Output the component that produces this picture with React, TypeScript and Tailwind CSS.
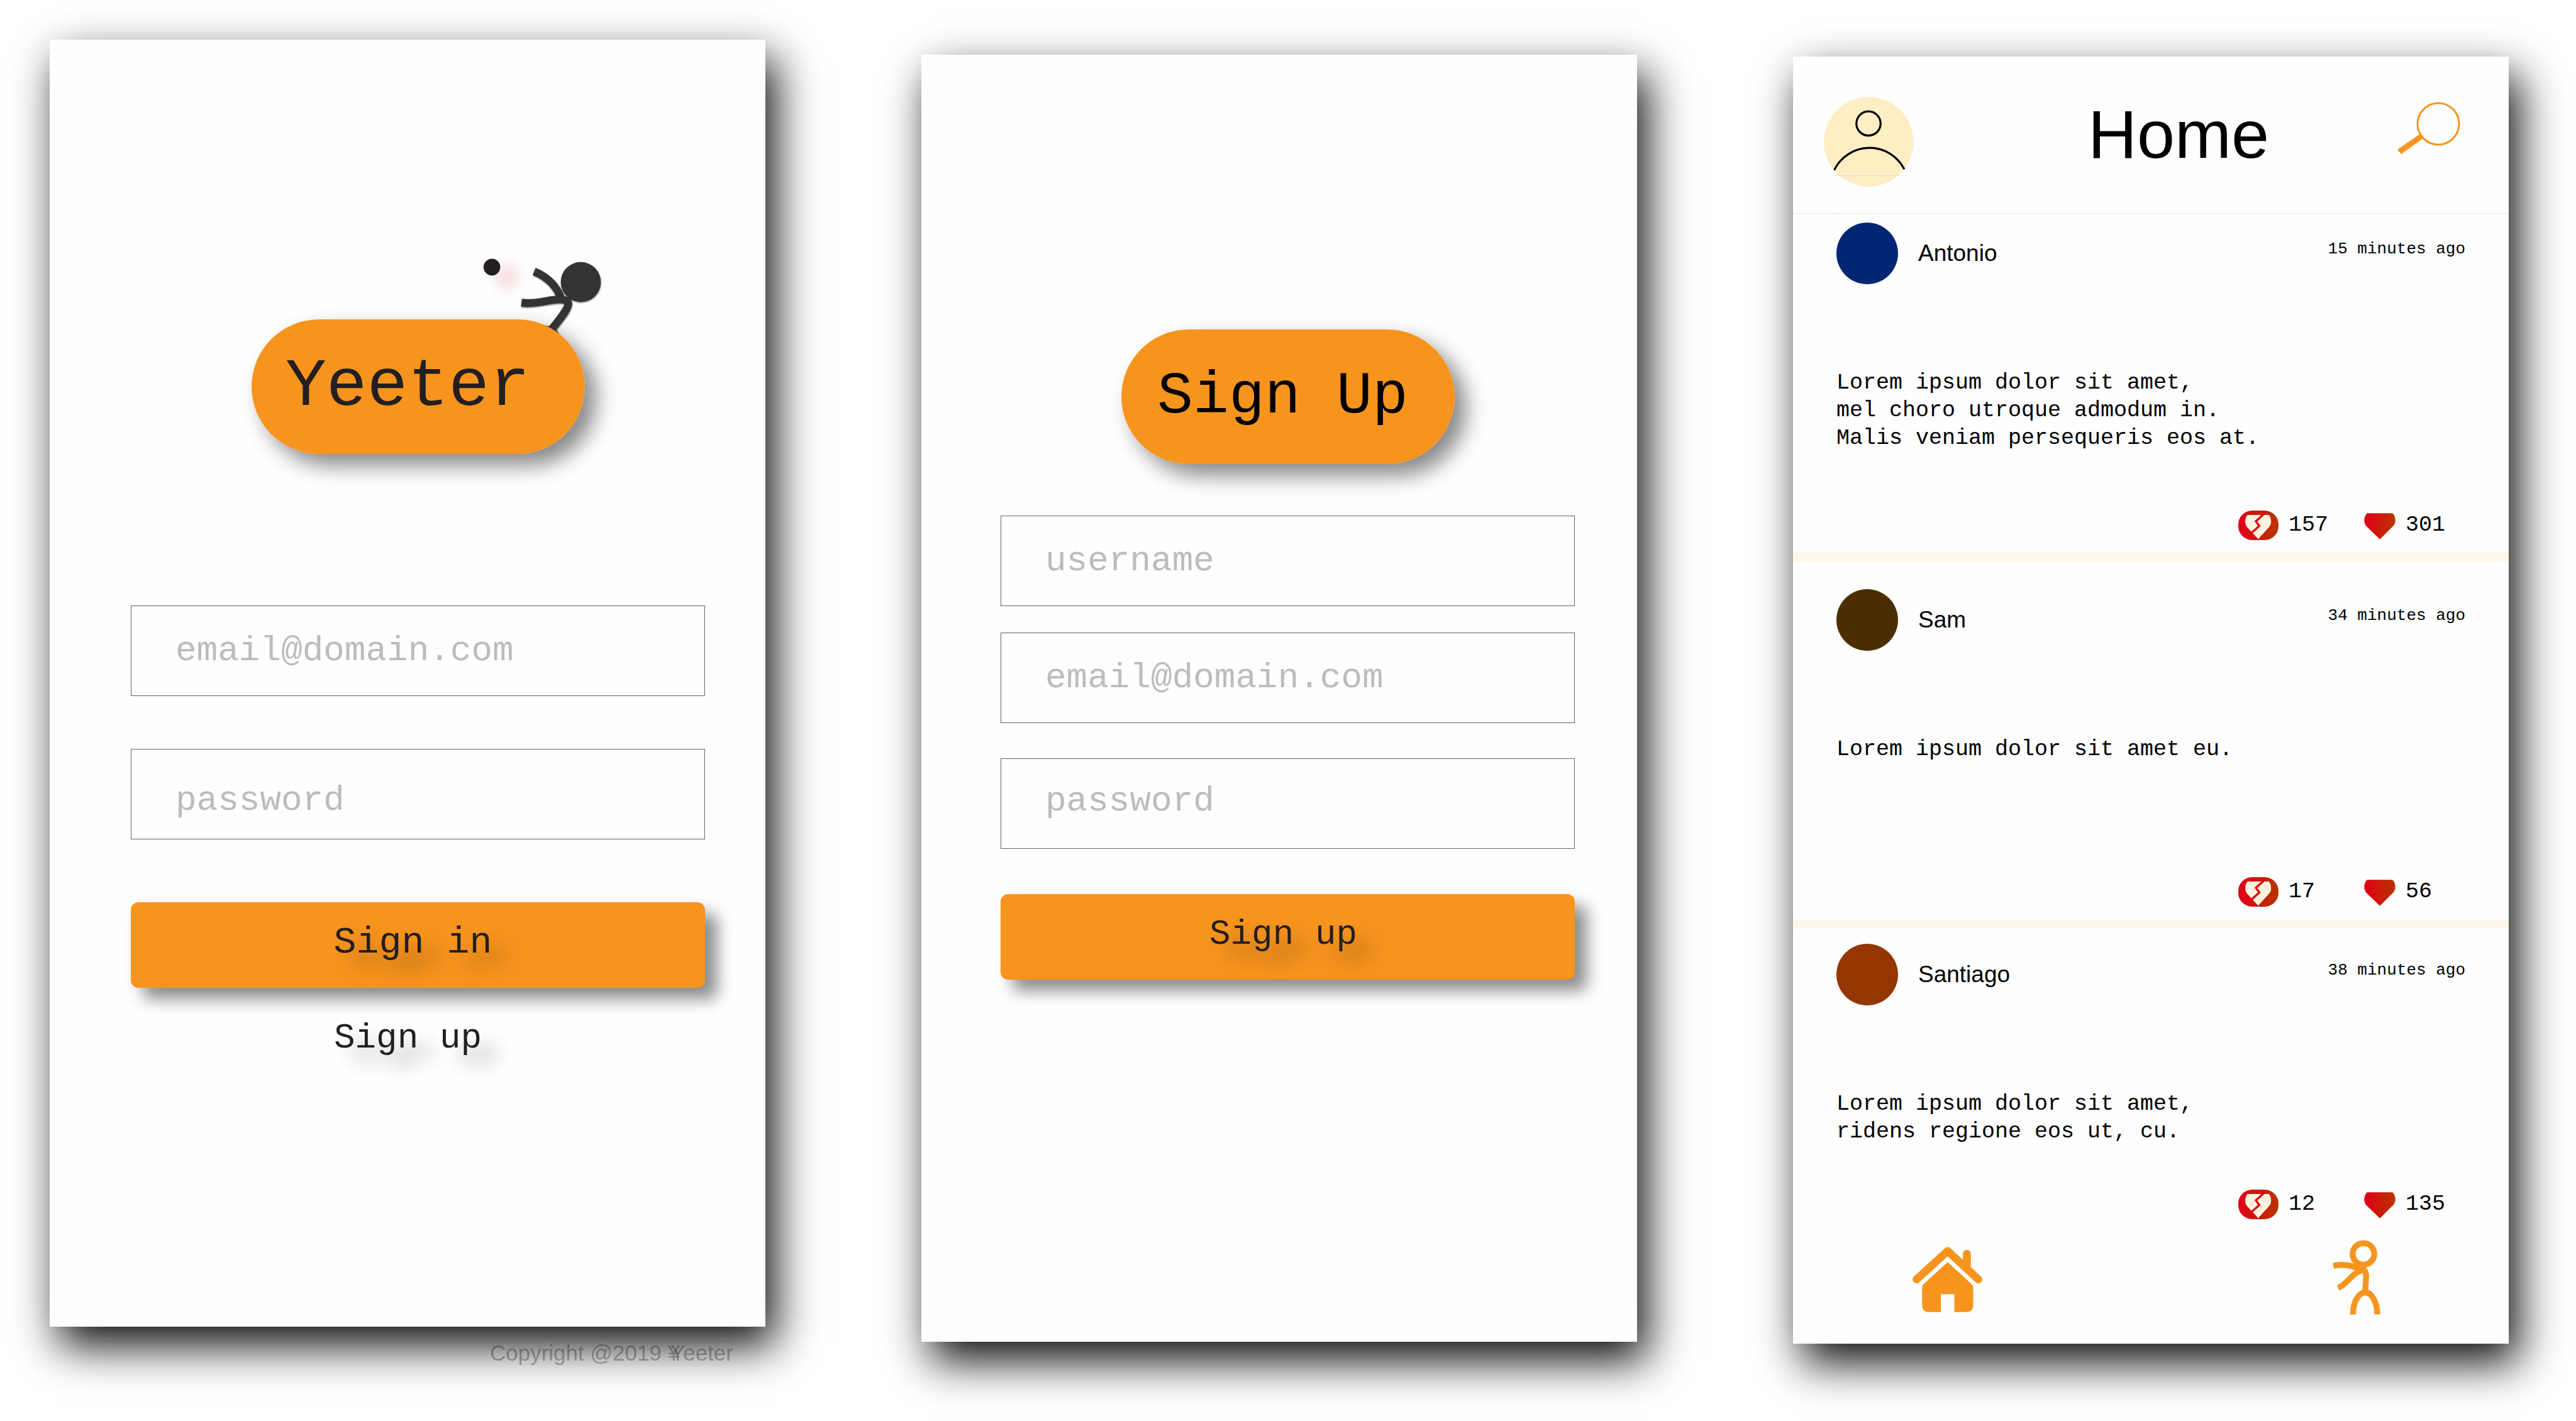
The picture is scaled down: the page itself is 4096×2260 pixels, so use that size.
import React, { useId } from "react";

const MONO = 'font-["Liberation_Mono",monospace]';

type FieldProps = {
  label: string;
  type: string;
  className?: string;
  inputClassName?: string;
};

function Field({ label, type, className = "", inputClassName = "" }: FieldProps) {
  return (
    <div className={className}>
      <input
        aria-label={label}
        type={type}
        placeholder={label}
        className={`block h-36 w-full border border-[#666] bg-transparent px-[70px] text-[56px] text-[#231f20] outline-none placeholder:text-[#bcbcbc] placeholder:opacity-100 ${inputClassName} ${MONO}`}
      />
    </div>
  );
}

function Thrower() {
  return (
    <svg
      viewBox="0 0 960 780"
      className="absolute -top-[124px] left-[354px] h-[192px] w-[237px] overflow-visible"
      aria-hidden="true"
    >
      <defs>
        <radialGradient id="blush">
          <stop offset="0" stopColor="#f8e0e2" />
          <stop offset="0.25" stopColor="#f9e6e8" />
          <stop offset="0.6" stopColor="#fdf7f7" />
          <stop offset="1" stopColor="#fefefe" stopOpacity="0" />
        </radialGradient>
      </defs>
      <circle cx="208" cy="228" r="170" fill="url(#blush)" />
      <circle cx="113" cy="166" r="54" fill="#231f20" />
      <g className="drop-shadow-[2px_5px_4px_rgba(0,0,0,0.6)]">
        <circle cx="687" cy="262" r="129" fill="#333333" />
        <g fill="none" stroke="#333333" strokeWidth="50">
          <path d="M386 194 C470 228 532 290 562 372" />
          <path d="M304 396 C400 408 480 374 545 374 C585 374 608 385 606 405 C604 440 550 505 490 578" />
          <path d="M400 570 Q510 555 530 625" />
        </g>
      </g>
    </svg>
  );
}

function PersonIcon() {
  return (
    <svg viewBox="69 84 580 580" className="h-[143px] w-[143px] overflow-visible" aria-hidden="true">
      <circle cx="358" cy="374" r="289" fill="#ffedc4" />
      <circle cx="362" cy="652" r="247" fill="none" stroke="#ececec" strokeWidth="2" strokeDasharray="10 5" />
      <path d="M123 592H602" stroke="#ececec" strokeWidth="3" />
      <path d="M165 592H551" stroke="#e2d3ae" strokeWidth="3" />
      <g fill="none" stroke="#000" strokeWidth="13">
        <circle cx="357" cy="256" r="78" />
        <path d="M136 557 A252 252 0 0 1 588 551" />
      </g>
    </svg>
  );
}

function SearchIcon() {
  return (
    <svg viewBox="0 0 100 84" className="h-[84px] w-[100px]" aria-hidden="true">
      <circle cx="65" cy="35" r="33" fill="none" stroke="#f7941e" strokeWidth="3" />
      <path d="M36 51L41 58L6 83L0 76Z" fill="#f7941e" />
    </svg>
  );
}

const HEART =
  "M6 .5H61C65 4 67 10 67 15.6C67 21 65.5 25 61.5 29L33.7 56.7L5 29C1.5 25 0 21 0 15.6C0 10 2 5 6 .5Z";

function RedGradient({ id }: { id: string }) {
  return (
    <defs>
      <linearGradient id={id}>
        <stop offset="0.1" stopColor="#df0417" />
        <stop offset="0.95" stopColor="#b93200" />
      </linearGradient>
    </defs>
  );
}

function BrokenHeart() {
  const id = useId();
  return (
    <svg viewBox="0 0 87 64" className="h-[47px] w-[64px]" aria-hidden="true">
      <RedGradient id={id} />
      <rect width="87" height="64" rx="30" fill={`url(#${id})`} />
      <path d={HEART} transform="translate(15 9) scale(.835 .93)" fill="#fff3de" />
      <path d="M59 4.5L38 23L45.5 33.5L29 48" fill="none" stroke="#df0417" strokeWidth="4.5" />
    </svg>
  );
}

function Heart() {
  const id = useId();
  return (
    <svg viewBox="0 0 67 57" className="mt-1 h-[42px] w-[50px]" aria-hidden="true">
      <RedGradient id={id} />
      <path d={HEART} fill={`url(#${id})`} />
    </svg>
  );
}

function HouseIcon() {
  return (
    <svg viewBox="0 0 150 141" className="h-[104px] w-[111px]" aria-hidden="true">
      <g fill="none" stroke="#f7941e" strokeWidth="17" strokeLinecap="round" strokeLinejoin="round">
        <path d="M8.5 70L75.5 9L141.5 70" />
        <path d="M117 15V42" />
      </g>
      <path
        d="M75.5 33L128 81Q130.6 84 130.6 88V125Q130.6 140.6 115 140.6H90V102H61V140.6H36Q20.4 140.6 20.4 125V88Q20.4 84 23 81Z"
        fill="#f7941e"
      />
    </svg>
  );
}

function StickmanIcon() {
  return (
    <svg viewBox="353 147 310 484" className="h-[119px] w-[76px]" aria-hidden="true">
      <g fill="none" stroke="#f7941e" strokeWidth="38">
        <circle cx="553" cy="237" r="70" />
        <path d="M357 314C415 303 470 306 530 336" />
        <path d="M389 458C455 428 490 345 552 342" />
        <path d="M548 342C578 338 571 390 564 482" />
        <path d="M487 630C482 555 520 487 567 487C605 487 646 555 642 630" />
      </g>
    </svg>
  );
}

const CARD = "bg-[#fefefe] shadow-[15px_30px_66px_rgba(0,0,0,0.95)]";
const PILL_SHADOW = "rounded-full shadow-[18px_18px_34px_rgba(0,0,0,0.47)]";
const BUTTON =
  "block h-[136px] w-full rounded-xl bg-[#f7941e] pb-2 text-center text-[#231f20] shadow-[19px_18px_26px_rgba(0,0,0,0.45)] [text-shadow:25px_23px_32px_rgba(0,0,0,0.32)]";

function SignInScreen() {
  return (
    <div className="mt-[63px] min-w-0">
      <section className={`min-h-[2047px] pt-[445px] pr-24 pl-[129px] ${CARD}`}>
        <div className={`relative ml-48 h-[214px] w-[530px] ${PILL_SHADOW}`}>
          <Thrower />
          <h1
            className={`relative flex h-full items-center rounded-full bg-[#f7941e] pl-[54px] text-[108px] leading-none text-[#231f20] ${MONO}`}
          >
            Yeeter
          </h1>
        </div>
        <form className="mt-[241px]" onSubmit={(e) => e.preventDefault()}>
          <Field label="email@domain.com" type="email" />
          <Field label="password" type="password" className="mt-21" inputClassName="pt-5" />
          <button type="submit" className={`mt-25 pr-4 text-[60px] ${BUTTON} ${MONO}`}>
            Sign in
          </button>
        </form>
        <div className="mt-12 flex justify-center pr-8">
          <a
            href="#sign-up"
            className={`text-[56px] leading-[64px] text-[#231f20] [text-shadow:25px_23px_28px_rgba(0,0,0,0.3)] ${MONO}`}
          >
            Sign up
          </a>
        </div>
      </section>
      <footer className='relative mt-5 pr-[51px] text-right font-["Liberation_Sans",sans-serif] text-[35px] leading-[44px] text-black/30'>
        Copyright @2019 <span className="-mr-[15px]">¥</span>Yeeter
      </footer>
    </div>
  );
}

function SignUpScreen() {
  return (
    <section
      id="sign-up"
      className={`mt-[87px] min-h-[2047px] min-w-0 self-start pt-[437px] pr-[99px] pl-[126px] ${CARD}`}
    >
      <div className={`ml-48 h-[214px] w-[530px] ${PILL_SHADOW}`}>
        <h1
          className={`flex h-full items-center rounded-full bg-[#f7941e] pl-[57px] text-[95px] leading-none text-black ${MONO}`}
        >
          Sign Up
        </h1>
      </div>
      <form className="mt-[82px]" onSubmit={(e) => e.preventDefault()}>
        <Field label="username" type="text" />
        <Field label="email@domain.com" type="email" className="mt-[42px]" />
        <Field label="password" type="password" className="mt-14" inputClassName="pb-2" />
        <button type="submit" className={`mt-18 pr-3.5 text-[56px] ${BUTTON} ${MONO}`}>
          Sign up
        </button>
      </form>
    </section>
  );
}

type Post = {
  name: string;
  time: string;
  lines: string[];
  broken: number;
  hearts: number;
  avatar: string;
  spacing: string;
  body: string;
};

const POSTS: Post[] = [
  {
    name: "Antonio",
    time: "15 minutes ago",
    lines: ["Lorem ipsum dolor sit amet,", "mel choro utroque admodum in.", "Malis veniam persequeris eos at."],
    broken: 157,
    hearts: 301,
    avatar: "bg-[#002673]",
    spacing: "pt-3.5 pb-[23px] border-b-[15px]",
    body: "min-h-[222px]",
  },
  {
    name: "Sam",
    time: "34 minutes ago",
    lines: ["Lorem ipsum dolor sit amet eu."],
    broken: 17,
    hearts: 56,
    avatar: "bg-[#4b2e00]",
    spacing: "pt-[43px] pb-[23px] border-b-[15px]",
    body: "min-h-[222px]",
  },
  {
    name: "Santiago",
    time: "38 minutes ago",
    lines: ["Lorem ipsum dolor sit amet,", "ridens regione eos ut, cu."],
    broken: 12,
    hearts: 135,
    avatar: "bg-[#943600]",
    spacing: "pt-6",
    body: "min-h-[155px]",
  },
];

function PostItem({ post }: { post: Post }) {
  return (
    <article className={`border-[#fff7eb] px-[69px] ${post.spacing}`}>
      <header className="flex h-[98px] items-start">
        <span className={`h-[98px] w-[98px] rounded-full ${post.avatar}`} />
        <h2 className='mt-[27px] ml-8 font-["Liberation_Sans",sans-serif] text-[37px] leading-[44px] text-black'>
          {post.name}
        </h2>
        <time className={`mt-[26px] ml-auto text-[26px] leading-8 text-black ${MONO}`}>{post.time}</time>
      </header>
      <p className={`mt-[135px] text-[35px] leading-[44px] text-black ${post.body} ${MONO}`}>
        {post.lines.map((line) => (
          <span key={line} className="block">
            {line}
          </span>
        ))}
      </p>
      <div className={`grid h-[47px] grid-cols-[200px_161px] justify-end text-[35px] text-black ${MONO}`}>
        <button type="button" aria-label={`Broken hearts: ${post.broken}`} className="flex items-center gap-4">
          <BrokenHeart />
          <span>{post.broken}</span>
        </button>
        <button type="button" aria-label={`Hearts: ${post.hearts}`} className="flex items-center gap-4">
          <Heart />
          <span>{post.hearts}</span>
        </button>
      </div>
    </article>
  );
}

function HomeScreen() {
  return (
    <section className={`mt-[90px] min-w-0 self-start pb-[46px] ${CARD}`}>
      <header className="flex h-[250px] items-start border-b border-[#e4e4e4] pt-16 pr-[77px] pl-[49px]">
        <button type="button" aria-label="Profile" className="block">
          <PersonIcon />
        </button>
        <h1 className='mt-1.5 ml-[277px] font-["Liberation_Sans",sans-serif] text-[108px] leading-none text-black'>
          Home
        </h1>
        <button type="button" aria-label="Search" className="mt-2 ml-auto block">
          <SearchIcon />
        </button>
      </header>
      {POSTS.map((post) => (
        <PostItem key={post.name} post={post} />
      ))}
      <nav className="flex items-end justify-between pt-9 pr-[204px] pl-[190px]">
        <a href="#home" aria-label="Home" className="mb-1 block">
          <HouseIcon />
        </a>
        <a href="#yeet" aria-label="Yeet" className="block">
          <StickmanIcon />
        </a>
      </nav>
    </section>
  );
}

export default function App() {
  return (
    <main className="grid min-h-screen grid-cols-3 gap-x-[248px] overflow-hidden bg-white pr-[107px] pl-[79px]">
      <SignInScreen />
      <SignUpScreen />
      <HomeScreen />
    </main>
  );
}
